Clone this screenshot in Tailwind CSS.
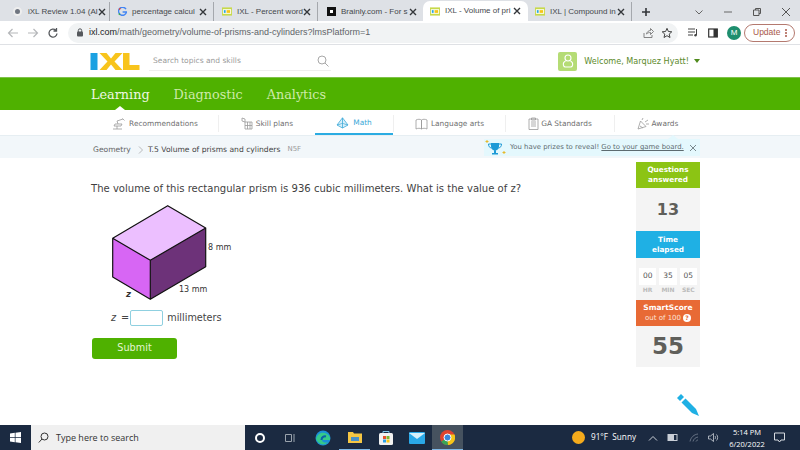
<!DOCTYPE html>
<html lang="en">
<head>
  <meta charset="UTF-8" />
  <title>IXL - Volume of prisms and cylinders</title>
  <script src="https://cdn.jsdelivr.net/npm/@tailwindcss/browser@4"></script>
</head>
<body class="w-[800px] h-[450px] overflow-hidden bg-white font-['DejaVu_Sans',sans-serif] text-[#4b4b4b] flex flex-col">

<!-- Browser tabs -->
<div class="h-[21px] shrink-0 bg-[#dee1e6] flex items-end pl-[4px] font-['Liberation_Sans',sans-serif] text-[8px] text-[#45484c] whitespace-nowrap">
  <div class="w-[106px] h-[19px] flex items-center pl-[9px] pr-[6px] border-r border-[#a5a8ad]">
    <span class="w-[9px] h-[9px] rounded-full bg-[#6f7580] border-2 border-[#eeeeee] shrink-0"></span>
    <span class="ml-[6px]">iXL Review 1.04 (Al</span>
    <svg width="8" height="8" viewBox="0 0 8 8" class="ml-auto shrink-0"><path d="M1 1l6 6M7 1 1 7" stroke="#33363a" stroke-width="1.400"/></svg>
  </div>
  <div class="w-[104px] h-[19px] flex items-center pl-[8px] pr-[6px] border-r border-[#a5a8ad]">
    <svg width="9" height="9" viewBox="0 0 9 9" class="shrink-0"><path d="M8 2.200A4 4 0 1 0 8.500 5H4.600" fill="none" stroke="#4285f4" stroke-width="1.400"/><path d="M1 2.500 2.500 1.200" stroke="#ea4335" stroke-width="1.400"/><path d="M.8 6.500 2 7.800" stroke="#34a853" stroke-width="1.400"/></svg>
    <span class="ml-[5px]">percentage calcul</span>
    <svg width="8" height="8" viewBox="0 0 8 8" class="ml-auto shrink-0"><path d="M1 1l6 6M7 1 1 7" stroke="#33363a" stroke-width="1.400"/></svg>
  </div>
  <div class="w-[104px] h-[19px] flex items-center pl-[8px] pr-[6px] border-r border-[#a5a8ad]">
    <svg width="10" height="9" viewBox="0 0 11 9" class="shrink-0"><rect width="11" height="9" fill="#c7d94a"/><rect x="1" y="2" width="9" height="5" fill="#fff"/><rect x="2" y="3" width="2" height="3" fill="#2ba6de"/><rect x="5" y="3" width="4" height="3" fill="#f5c518"/></svg>
    <span class="ml-[5px]">IXL - Percent word</span>
    <svg width="8" height="8" viewBox="0 0 8 8" class="ml-auto shrink-0"><path d="M1 1l6 6M7 1 1 7" stroke="#33363a" stroke-width="1.400"/></svg>
  </div>
  <div class="w-[105px] h-[19px] flex items-center pl-[9px] pr-[6px]">
    <span class="w-[9px] h-[9px] bg-[#111] shrink-0 flex items-center justify-center"><span class="w-[3px] h-[3px] bg-white"></span></span>
    <span class="ml-[5px]">Brainly.com - For s</span>
    <svg width="8" height="8" viewBox="0 0 8 8" class="ml-auto shrink-0"><path d="M1 1l6 6M7 1 1 7" stroke="#33363a" stroke-width="1.400"/></svg>
  </div>
  <div class="w-[105px] h-[20px] bg-white rounded-t-[7px] flex items-center pl-[7px] pr-[7px]">
    <svg width="10" height="9" viewBox="0 0 11 9" class="shrink-0"><rect width="11" height="9" fill="#c7d94a"/><rect x="1" y="2" width="9" height="5" fill="#fff"/><rect x="2" y="3" width="2" height="3" fill="#2ba6de"/><rect x="5" y="3" width="4" height="3" fill="#f5c518"/></svg>
    <span class="ml-[5px]">IXL - Volume of pri</span>
    <svg width="8" height="8" viewBox="0 0 8 8" class="ml-auto shrink-0"><path d="M1 1l6 6M7 1 1 7" stroke="#33363a" stroke-width="1.400"/></svg>
  </div>
  <div class="w-[104px] h-[19px] flex items-center pl-[7px] pr-[6px] border-r border-[#a5a8ad]">
    <svg width="10" height="9" viewBox="0 0 11 9" class="shrink-0"><rect width="11" height="9" fill="#c7d94a"/><rect x="1" y="2" width="9" height="5" fill="#fff"/><rect x="2" y="3" width="2" height="3" fill="#2ba6de"/><rect x="5" y="3" width="4" height="3" fill="#f5c518"/></svg>
    <span class="ml-[5px]">IXL | Compound in</span>
    <svg width="8" height="8" viewBox="0 0 8 8" class="ml-auto shrink-0"><path d="M1 1l6 6M7 1 1 7" stroke="#33363a" stroke-width="1.400"/></svg>
  </div>
  <svg width="10" height="10" viewBox="0 0 10 10" class="ml-[9px] mb-[4px]"><path d="M5 1v8M1 5h8" stroke="#33363a" stroke-width="1.600"/></svg>
  <div class="ml-auto h-[19px] flex items-center">
    <svg width="10" height="10" viewBox="0 0 10 10" class="mr-[19px]"><path d="M1.500 3.500 5 7l3.500-3.500" fill="none" stroke="#666" stroke-width="1"/></svg>
    <svg width="10" height="10" viewBox="0 0 10 10" class="mr-[19px]"><path d="M1 5h8" stroke="#666" stroke-width="1"/></svg>
    <svg width="10" height="10" viewBox="0 0 10 10" class="mr-[19px]"><path d="M1.500 3h5.500v5.500h-5.500zM3.500 3V1.500h5v5H7" fill="none" stroke="#555" stroke-width="1"/></svg>
    <svg width="10" height="10" viewBox="0 0 10 10" class="mr-[9px]"><path d="M1 1l8 8M9 1 1 9" stroke="#555" stroke-width="1"/></svg>
  </div>
</div>

<!-- Browser toolbar -->
<div class="h-[24px] flex items-center border-b border-[#dfe1e5] shrink-0">
  <svg width="12" height="12" viewBox="0 0 12 12" class="ml-[7px]"><path d="M11 6H1.500M5.500 2 1.500 6l4 4" fill="none" stroke="#b5b7ba" stroke-width="1.200"/></svg>
  <svg width="12" height="12" viewBox="0 0 12 12" class="ml-[8px]"><path d="M1 6h9.500M6.500 2l4 4-4 4" fill="none" stroke="#b5b7ba" stroke-width="1.200"/></svg>
  <svg width="12" height="12" viewBox="0 0 12 12" class="ml-[8px]"><path d="M10 6.500A4 4 0 1 1 8.800 3.200M9.500 1v3h-3" fill="none" stroke="#55585c" stroke-width="1.300"/></svg>
  <div class="ml-[9px] w-[610px] h-[20px] rounded-full bg-[#f1f3f4] flex items-center pl-[8px] font-['Liberation_Sans',sans-serif] text-[9px] text-[#5f6368]">
    <svg width="8" height="9" viewBox="0 0 8 9"><rect x="1" y="3.500" width="6" height="5" rx="1" fill="#55585c"/><path d="M2.300 4V2.500a1.700 1.700 0 0 1 3.400 0V4" fill="none" stroke="#55585c"/></svg>
    <span class="ml-[5px] whitespace-nowrap"><span class="text-[#202124]">ixl.com</span>/math/geometry/volume-of-prisms-and-cylinders?lmsPlatform=1</span>
    <svg width="12" height="12" viewBox="0 0 12 12" class="ml-auto"><path d="M2 6v4.500h8V8M4.500 7c.5-2.500 2.500-3.500 4-3.500V1.500L11.500 4.500 8.500 7.500V5.500c-1.500 0-3 .3-4 1.500z" fill="none" stroke="#777" stroke-width=".9"/></svg>
    <svg width="12" height="12" viewBox="0 0 12 12" class="ml-[7px] mr-[5px]"><path d="M6 1.300 7.400 4.500l3.400.3-2.600 2.300.8 3.400L6 8.700 3 10.500l.8-3.400L1.200 4.800l3.400-.3z" fill="none" stroke="#444" stroke-width="1"/></svg>
  </div>
  <svg width="11" height="11" viewBox="0 0 11 11" class="ml-[9px]"><path d="M1 2h7M1 5h7M1 8h5M9.500 2v6" stroke="#444" stroke-width="1"/><circle cx="8.500" cy="8.300" r="1.200" fill="#444"/></svg>
  <svg width="10" height="10" viewBox="0 0 10 10" class="ml-[10px]"><rect x=".7" y="1" width="8.600" height="8" fill="none" stroke="#333" stroke-width="1.200"/><rect x="5.500" y="1" width="3.800" height="8" fill="#333"/></svg>
  <div class="ml-[9px] w-[14px] h-[14px] rounded-full bg-[#1e8e6e] text-white text-[8px] flex items-center justify-center font-['Liberation_Sans',sans-serif]">M</div>
  <div class="ml-[3px] w-[51px] h-[18px] rounded-full border border-[#b4796f] text-[#a9584a] text-[8.500px] font-['Liberation_Sans',sans-serif] flex items-center pl-[8px]">
    Update
    <span class="ml-auto mr-[7px] flex flex-col gap-[1px]">
      <span class="w-[2px] h-[2px] rounded-full bg-[#a9584a]"></span>
      <span class="w-[2px] h-[2px] rounded-full bg-[#a9584a]"></span>
      <span class="w-[2px] h-[2px] rounded-full bg-[#a9584a]"></span>
    </span>
  </div>
</div>

<!-- IXL header -->
<div class="h-[32px] shrink-0 flex items-center pl-[90px] pr-[100px]">
  <svg width="50" height="19" viewBox="0 0 50 19" class="shrink-0">
    <rect x="0.500" y="1" width="7" height="17" fill="#1ba1e2"/>
    <path d="M9.500 1h7l4.500 5.500L25.500 1h7l-8 8.500 8 8.500h-7l-4.500-5.500L16.500 18h-7l8-8.500z" fill="#f8c41c"/>
    <path d="M33 1h6.500v12H49.500v5H33z" fill="#f8c41c"/>
  </svg>
  <div class="ml-[9px] w-[182px] h-[20px] pl-[4px] border-b border-[#eeeeee] flex items-center text-[7.500px] text-[#9a9a9a]">
    Search topics and skills
    <svg width="12" height="12" viewBox="0 0 12 12" class="ml-auto mr-[2px]"><circle cx="5" cy="5" r="4" fill="none" stroke="#a8a8a8"/><path d="M8 8l3.500 3.500" stroke="#a8a8a8"/></svg>
  </div>
  <div class="ml-auto w-[19px] h-[19px] rounded-[2px] bg-[#b5dc75] flex items-center justify-center">
    <svg width="12" height="14" viewBox="0 0 12 14"><circle cx="6" cy="4" r="3" fill="none" stroke="#fff" stroke-width="1.100"/><path d="M3.500 7C1.500 8 1 9.500 1.500 11.500c.3 1 1.200 1.500 2 1.500h5c.8 0 1.700-.5 2-1.500.5-2 0-3.500-2-4.500" fill="none" stroke="#fff" stroke-width="1.100"/></svg>
  </div>
  <span class="ml-[7px] text-[8.100px] text-[#5c8a2c] whitespace-nowrap">Welcome, Marquez Hyatt!</span>
  <span class="ml-[5px] w-0 h-0 border-x-[3.500px] border-x-transparent border-t-[4px] border-t-[#4f8a1c]"></span>
</div>

<!-- Green nav -->
<div class="h-[33px] shrink-0 bg-[#4fb100] border-t border-[#7fc24a] pt-[1px] flex items-center pl-[91px] gap-[24px] font-['DejaVu_Serif',serif] text-[12.800px] text-[#cdeaa8] relative">
  <span class="text-[#eef8e2]">Learning</span>
  <span>Diagnostic</span>
  <span>Analytics</span>
  <span class="absolute left-[115px] bottom-0 w-0 h-0 border-x-[5px] border-x-transparent border-b-[4px] border-b-white"></span>
</div>

<!-- Subject nav -->
<div class="h-[26px] shrink-0 pl-[92px] pt-[2px] flex text-[7.400px] text-[#6f6f6f] border-b border-[#e6eef2]">
  <div class="w-[126px] flex items-center justify-center gap-[3px]">
    <svg width="14" height="13" viewBox="0 0 14 13"><path d="M1 12h9M5 12V9M2 9h7l1-2H3zM6 7 5 4l6-2M10.500 1.500l2 2" fill="none" stroke="#999" stroke-width=".8"/></svg>
    Recommendations
  </div>
  <div class="w-[97px] my-[3px] border-l border-[#efefef] flex items-center justify-center gap-[3px]">
    <svg width="12" height="13" viewBox="0 0 12 13"><path d="M4 5h7v7H4zM6.500 5v7M9 5v7M4 8.500h7M1 1l3 1v3L1 4z" fill="none" stroke="#999" stroke-width=".8"/></svg>
    Skill plans
  </div>
  <div class="w-[78px] border-b-2 border-[#2bace2] text-[#3da9d8] flex items-center justify-center gap-[4px]">
    <svg width="13" height="12" viewBox="0 0 13 12"><path d="M6.500.8 1 8l5.500 3L12 8zM6.500.8v10.200M1 8l5.500-1.500L12 8" fill="#d9f0fa" stroke="#3da9d8" stroke-width=".8"/></svg>
    Math
  </div>
  <div class="w-[112px] my-[3px] border-l border-[#efefef] flex items-center justify-center gap-[3px]">
    <svg width="13" height="12" viewBox="0 0 13 12"><path d="M1 2c2-1 4-1 5.500 0v9C5 10 3 10 1 11zM12 2c-2-1-4-1-5.500 0v9c1.500-1 3.500-1 5.500 0z" fill="none" stroke="#999" stroke-width=".8"/></svg>
    Language arts
  </div>
  <div class="w-[109px] my-[3px] border-l border-[#efefef] flex items-center justify-center gap-[2px]">
    <svg width="11" height="13" viewBox="0 0 11 13"><path d="M1 2h9v10.500H1zM3.500 1h4v2h-4zM3 5h5M3 7h5M3 9h5" fill="none" stroke="#999" stroke-width=".8"/></svg>
    GA Standards
  </div>
  <div class="w-[86px] my-[3px] border-l border-[#efefef] flex items-center justify-center gap-[2px]">
    <svg width="13" height="13" viewBox="0 0 13 13"><path d="M1 12 3.500 4 9 9.500zM5 3l1-2M8 5l3-2M9 7l3 0M3 9l3 2" fill="none" stroke="#999" stroke-width=".8"/></svg>
    Awards
  </div>
</div>

<!-- Breadcrumb -->
<div class="h-[22px] shrink-0 bg-[#f2f7fa] flex items-center pl-[93px] pt-[5px] text-[7.600px] relative">
  <span class="text-[#666]">Geometry</span>
  <svg width="6" height="8" viewBox="0 0 6 8" class="ml-[7px] mr-[4px]"><path d="M1 .5 4.500 4 1 7.500" fill="none" stroke="#aaa" stroke-width=".8"/></svg>
  <span class="text-[#444]">T.5 Volume of prisms and cylinders</span>
  <span class="ml-[7px] text-[#9a9a9a] text-[7px]">N5F</span>
  <!-- prizes popup -->
  <div class="absolute left-[484px] top-[3px] w-[216px] h-[17px] bg-[#e4f8fd] flex items-center text-[6.900px] text-[#5d6b70] whitespace-nowrap">
    <span class="absolute left-[184px] top-[-4px] w-0 h-0 border-x-[5px] border-x-transparent border-b-[4px] border-b-[#e4f8fd]"></span>
    <svg width="21" height="16" viewBox="0 0 21 16" class="ml-[1px] shrink-0">
      <path d="M6 3h8v3.500c0 2.500-2 4-4 4s-4-1.500-4-4zM9 10.500h2v2.500h2v1.500H7V13h2z" fill="#1d9ad6"/>
      <path d="M6 4H3.500c0 2.500 1 3.500 3 4M14 4h2.500c0 2.500-1 3.500-3 4" fill="none" stroke="#1d9ad6"/>
      <path d="M2 0v3M.5 1.500h3M19 11v3M17.500 12.500h3" stroke="#e7b92b"/>
    </svg>
    <span class="ml-[4px]">You have prizes to reveal! <span class="underline">Go to your game board.</span></span>
    <svg width="8" height="8" viewBox="0 0 8 8" class="ml-auto mr-[3px]"><path d="M1 1l6 6M7 1 1 7" stroke="#5d6b70" stroke-width=".8"/></svg>
  </div>
</div>

<!-- Question + stats -->
<div class="flex-1 flex pl-[91px] relative">
  <div class="w-[545px] pt-[23px]">
    <p class="text-[10.050px] leading-[15px] text-[#3f3f3f] whitespace-nowrap">The volume of this rectangular prism is 936 cubic millimeters. What is the value of z?</p>
    <svg width="150" height="103" viewBox="0 0 150 103" class="ml-[9px] mt-[5px]" font-family="DejaVu Sans">
      <path d="M12.700 37.300 67.700 4.700 105.700 27 50.300 59.300z" fill="#ecbfff"/>
      <path d="M12.700 37.300 50.300 59.300V98.300L12.700 76z" fill="#d766f4"/>
      <path d="M50.300 59.300 105.700 27V65.700L50.300 98.300z" fill="#6d3279"/>
      <path d="M12.700 37.300 67.700 4.700 105.700 27 50.300 59.300zM12.700 37.300V76L50.300 98.300 105.700 65.700V27M50.300 59.300V98.300" fill="none" stroke="#111" stroke-width="1.200" stroke-linejoin="round"/>
      <text x="108" y="49" font-size="8" fill="#333">8 mm</text>
      <text x="79" y="91" font-size="8" fill="#333">13 mm</text>
      <text x="26" y="96" font-size="8.500" font-style="italic" font-weight="bold" fill="#333">z</text>
    </svg>
    <div class="mt-[6px] ml-[20px] flex items-center text-[9.700px] text-[#444]">
      <span class="italic">z</span><span class="ml-[5px]">=</span>
      <span class="ml-[1px] w-[33px] h-[16px] rounded-[2px] border border-[#8fd0e0]"></span>
      <span class="ml-[4px]">millimeters</span>
    </div>
    <div class="mt-[12px] ml-[1px] w-[85px] h-[21px] rounded-[3px] bg-[#4fb100] text-[#e4f5d2] text-[9.700px] flex items-center justify-center">Submit</div>
  </div>

  <div class="w-[64px] pt-[4px] flex flex-col text-center">
    <div class="h-[26px] bg-[#8cc414] text-white text-[7.300px] font-bold leading-[10px] flex items-center justify-center">Questions<br>answered</div>
    <div class="h-[43px] bg-[#f4f4f4] text-[16px] font-bold text-[#5f5f5a] flex items-center justify-center">13</div>
    <div class="h-[27px] bg-[#1fb0e4] text-white text-[7.300px] font-bold leading-[10px] flex items-center justify-center">Time<br>elapsed</div>
    <div class="h-[38px] bg-[#f4f4f4] pt-[10px] px-[3px] grid grid-cols-3 gap-x-[3px] text-[7.500px] text-[#555] leading-[15px]">
      <span class="bg-white">00</span><span class="bg-white">35</span><span class="bg-white">05</span>
      <span class="text-[6px] leading-[10px] text-[#bbb] font-bold">HR</span><span class="text-[6px] leading-[10px] text-[#bbb] font-bold">MIN</span><span class="text-[6px] leading-[10px] text-[#bbb] font-bold">SEC</span>
    </div>
    <div class="h-[4px] bg-[#f4f4f4]"></div>
    <div class="h-[26px] bg-[#e86a35] text-white flex flex-col items-center justify-center leading-[10px]">
      <span class="text-[7.500px] font-bold">SmartScore</span>
      <span class="text-[7px] text-[#fde3d6] flex items-center gap-[2px]">out of 100 <span class="w-[8px] h-[8px] rounded-full bg-white text-[#e86a35] text-[6px] leading-[8px] font-bold">?</span></span>
    </div>
    <div class="h-[41px] bg-[#f4f4f4] text-[23px] font-bold text-[#5f5f5a] flex items-center justify-center">55</div>
  </div>

  <!-- scratchpad pencil -->
  <svg width="24" height="24" viewBox="0 0 24 24" class="absolute left-[676px] top-[235px]">
    <path d="M1 5 5 1 8 4 4 8z" fill="#1fb0e4"/>
    <path d="M5.500 9.500 9.500 5.500 20 16 23 23 16 20z" fill="#1fb0e4"/>
  </svg>
</div>

<!-- Windows taskbar -->
<div class="h-[25px] shrink-0 bg-[#1b2a41] flex items-center text-white font-['Open_Sans',sans-serif]">
  <svg width="11" height="11" viewBox="0 0 11 11" class="ml-[10px]"><path d="M0 1.500 4.800.8v4.300H0zM5.500.7 11 0v5.100H5.500zM0 5.800h4.800v4.400L0 9.500zM5.500 5.800H11V11l-5.500-.8z" fill="#fff"/></svg>
  <div class="ml-[10px] w-[214px] h-[25px] bg-[#f0f0f0] flex items-center pl-[7px] text-[#333] text-[9px]">
    <svg width="11" height="11" viewBox="0 0 11 11"><circle cx="6.500" cy="4.500" r="3.500" fill="none" stroke="#333"/><path d="M4 7 .8 10.500" stroke="#333"/></svg>
    <span class="ml-[7px]">Type here to search</span>
  </div>
  <span class="ml-[10px] w-[10px] h-[10px] rounded-full border-2 border-white"></span>
  <svg width="11" height="10" viewBox="0 0 11 10" class="ml-[20px]"><path d="M.5 1.500h6v7h-6zM9 1v8" fill="none" stroke="#9aa3ad"/></svg>
  <svg width="16" height="16" viewBox="0 0 16 16" class="ml-[19px]"><circle cx="8" cy="8" r="7.500" fill="#1b8fd8"/><path d="M1 9c1-5 6-8 11-5 2.500 1.500 3.500 3.500 3 6H7c0 2 3 3.500 6 2-3 4-10 3-12-3z" fill="#35c98a"/><path d="M6.500 10C6.500 7 9 6 11 6.500" stroke="#0c5fa8" stroke-width="2" fill="none"/></svg>
  <div class="ml-[8px] w-[31px] h-[25px] flex items-center justify-center border-b border-[#7fb8e6]">
    <svg width="14" height="12" viewBox="0 0 14 12"><path d="M0 1h5l1 1.500h8V12H0z" fill="#f5c644"/><rect x="3" y="6" width="8" height="4" fill="#4a90c8"/></svg>
  </div>
  <div class="w-[31px] h-[25px] flex items-center justify-center">
    <svg width="14" height="14" viewBox="0 0 14 14"><rect x="0" y="2" width="14" height="12" rx="1.500" fill="#f1f1f1"/><rect x="4" y="5" width="3" height="3" fill="#e8502a"/><rect x="7.500" y="5" width="3" height="3" fill="#7cb82f"/><rect x="4" y="8.500" width="3" height="3" fill="#2a9fe8"/><rect x="7.500" y="8.500" width="3" height="3" fill="#f5c518"/><path d="M4 2V0.500h6V2" stroke="#7fc6e8" fill="none"/></svg>
  </div>
  <div class="w-[31px] h-[25px] flex items-center justify-center">
    <svg width="16" height="12" viewBox="0 0 16 12"><rect width="16" height="12" rx="1" fill="#2aa8e8"/><path d="M0 1l8 6 8-6" fill="#d7f0fb"/></svg>
  </div>
  <div class="w-[31px] h-[25px] bg-[#46525f] flex items-center justify-center border-b border-[#7fb8e6]">
    <svg width="15" height="15" viewBox="0 0 15 15"><circle cx="7.500" cy="7.500" r="7.500" fill="#e0432f"/><path d="M7.500 7.500 1.200 11.500A7.500 7.500 0 0 0 8 15z" fill="#3aa655"/><path d="M7.500 7.500 8 15A7.500 7.500 0 0 0 14.500 4.500H7.500z" fill="#f5c518"/><circle cx="7.500" cy="7.500" r="3.500" fill="#3d85d8" stroke="#fff"/></svg>
  </div>
  <span class="ml-[109px] w-[13px] h-[13px] rounded-full bg-[#f5ab1c]"></span>
  <span class="ml-[6px] w-[45px] text-[8.200px] whitespace-nowrap">91°F&nbsp; Sunny</span>
  <svg width="10" height="6" viewBox="0 0 10 6" class="ml-[12px]"><path d="M1 5.500 5 1.500l4 4" fill="none" stroke="#c9ced6"/></svg>
  <svg width="11" height="7" viewBox="0 0 11 7" class="ml-[9px]"><rect x="1" y=".5" width="9" height="6" fill="none" stroke="#c9ced6"/><rect x="1" y=".5" width="6" height="6" fill="#c9ced6"/></svg>
  <svg width="10" height="9" viewBox="0 0 10 9" class="ml-[11px]"><path d="M1 8.500C2 4 5 1.500 9 1M4 8.500C4.500 6 6.500 4.500 9 4M7 8.500C7 8 8 7 9 7" fill="none" stroke="#7b8595" stroke-width=".8"/></svg>
  <svg width="11" height="9" viewBox="0 0 11 9" class="ml-[9px]"><path d="M.5 3h2L5.500.5v8L2.500 6h-2zM7 3c.7.8.7 2.200 0 3M8.500 1.500c1.500 1.500 1.500 4.500 0 6" fill="none" stroke="#c9ced6" stroke-width=".8"/></svg>
  <div class="ml-[11px] w-[34px] text-center text-[7.500px] leading-[12px] whitespace-nowrap flex flex-col items-center">
    <span>5:14 PM</span><span>6/20/2022</span>
  </div>
  <svg width="11" height="11" viewBox="0 0 11 11" class="ml-[10px]"><path d="M.5 1h10v7H7L5.500 10 4 8H.5z" fill="none" stroke="#d6dae0"/></svg>
</div>

</body>
</html>
